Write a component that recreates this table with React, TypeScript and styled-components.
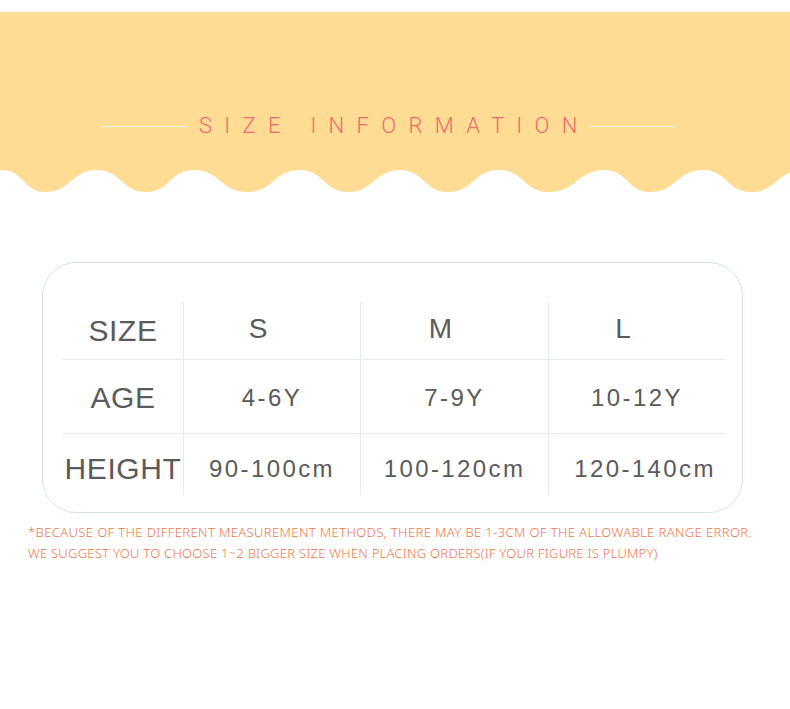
import React from "react";
import styled, { createGlobalStyle } from "styled-components";

const GlobalStyle = createGlobalStyle`
  html, body { margin: 0; padding: 0; background: #ffffff; }
  body { font-family: "Liberation Sans", Arial, sans-serif; }
`;

const YELLOW = "#FEDC94";

const Page = styled.div`
  width: 790px;
  height: 709px;
  padding-top: 12px;
  box-sizing: border-box;
  background: #ffffff;
  overflow: hidden;
`;

const Banner = styled.div`
  height: 158px;
  background: ${YELLOW};
  display: flex;
  align-items: flex-start;
  justify-content: flex-start;
  padding: 101px 0 0 101px;
  box-sizing: border-box;
`;

const TitleRow = styled.div`
  display: flex;
  align-items: center;
  gap: 11px;
`;

const TitleLine = styled.span`
  display: block;
  width: 87px;
  height: 1px;
  background: #fff6e2;
`;

const Title = styled.h1`
  margin: 0 -12.3px 0 0;
  font-family: Roboto, "Liberation Sans", sans-serif;
  font-weight: 300;
  font-size: 22px;
  line-height: 26px;
  letter-spacing: 12.3px;
  color: #ef6a6a;
  white-space: nowrap;
`;

const Wave = styled.svg`
  display: block;
  width: 790px;
  height: 24px;
`;

const Card = styled.div`
  margin: 68px 0 0 42px;
  width: 701px;
  height: 251px;
  box-sizing: border-box;
  border: 1.5px solid #d3e4df;
  border-radius: 34px;
  padding: 39px 17px 0 20px;
`;

const Grid = styled.div`
  display: grid;
  grid-template-columns: 120px 177px 188px 177px;
  grid-template-rows: 57px 74px 62px;
`;

const Cell = styled.div<{ $col: number; $row: number }>`
  display: flex;
  align-items: center;
  justify-content: center;
  color: #5a5a5a;
  white-space: nowrap;
  border-left: ${(p) => (p.$col > 0 ? "1px solid #e4ecea" : "none")};
  border-top: ${(p) => (p.$row > 0 ? "1px solid #e4ecea" : "none")};
  padding-top: ${(p) => (p.$row === 2 ? "8px" : p.$row === 1 ? "2px" : "0")};
  padding-left: ${(p) => (p.$col === 3 && p.$row === 2 ? "16px" : "0")};
  box-sizing: border-box;
`;

const Label = styled.span`
  font-size: 30px;
  letter-spacing: 0.6px;
`;

const HeadValue = styled.span`
  font-size: 28px;
  margin-right: 28px;
  margin-top: -4px;
`;

const Value = styled.span`
  font-size: 24px;
  letter-spacing: 2.4px;
`;

const Notes = styled.div`
  margin: 9px 0 0 28px;
  font-family: "Noto Sans", "Liberation Sans", sans-serif;
  font-size: 13px;
  line-height: 21px;
  color: #ec7749;
  font-weight: 300;
`;

const NoteLine = styled.div<{ $spacing: number }>`
  white-space: nowrap;
  letter-spacing: ${(p) => p.$spacing}px;
`;

const peaks = [2, 97, 194, 300, 400, 499, 605, 703, 803];
const troughs = [45, 146, 247, 348, 448, 549, 650, 751];

function wavePath(): string {
  const pts: [number, number][] = [];
  for (let i = 0; i < peaks.length; i++) {
    pts.push([peaks[i], 0]);
    if (i < troughs.length) pts.push([troughs[i], 22]);
  }
  let d = `M-40 0 L-40 22 C-20 22 -10 ${pts[0][1]} ${pts[0][0]} ${pts[0][1]}`;
  for (let i = 1; i < pts.length; i++) {
    const [x1, y1] = pts[i - 1];
    const [x2, y2] = pts[i];
    const k = (x2 - x1) * 0.5;
    d += ` C${x1 + k} ${y1} ${x2 - k} ${y2} ${x2} ${y2}`;
  }
  d += " L850 0 Z";
  return d;
}

const rows = [
  { label: "SIZE", values: ["S", "M", "L"], head: true },
  { label: "AGE", values: ["4-6Y", "7-9Y", "10-12Y"] },
  { label: "HEIGHT", values: ["90-100cm", "100-120cm", "120-140cm"] },
];

export default function App() {
  return (
    <>
      <GlobalStyle />
      <Page>
        <Banner>
          <TitleRow>
            <TitleLine />
            <Title>SIZE INFORMATION</Title>
            <TitleLine />
          </TitleRow>
        </Banner>
        <Wave viewBox="0 0 790 24" preserveAspectRatio="none">
          <path d={wavePath()} fill={YELLOW} />
        </Wave>
        <Card>
          <Grid>
            {rows.map((r, ri) => (
              <React.Fragment key={r.label}>
                <Cell $col={0} $row={ri}>
                  <Label>{r.label}</Label>
                </Cell>
                {r.values.map((v, ci) => (
                  <Cell key={v} $col={ci + 1} $row={ri}>
                    {r.head ? <HeadValue>{v}</HeadValue> : <Value>{v}</Value>}
                  </Cell>
                ))}
              </React.Fragment>
            ))}
          </Grid>
        </Card>
        <Notes>
          <NoteLine $spacing={0.39}>
            *BECAUSE OF THE DIFFERENT MEASUREMENT METHODS, THERE MAY BE 1-3CM OF THE ALLOWABLE RANGE ERROR.
          </NoteLine>
          <NoteLine $spacing={0.25}>
            WE SUGGEST YOU TO CHOOSE 1~2 BIGGER SIZE WHEN PLACING ORDERS(IF YOUR FIGURE IS PLUMPY)
          </NoteLine>
        </Notes>
      </Page>
    </>
  );
}
